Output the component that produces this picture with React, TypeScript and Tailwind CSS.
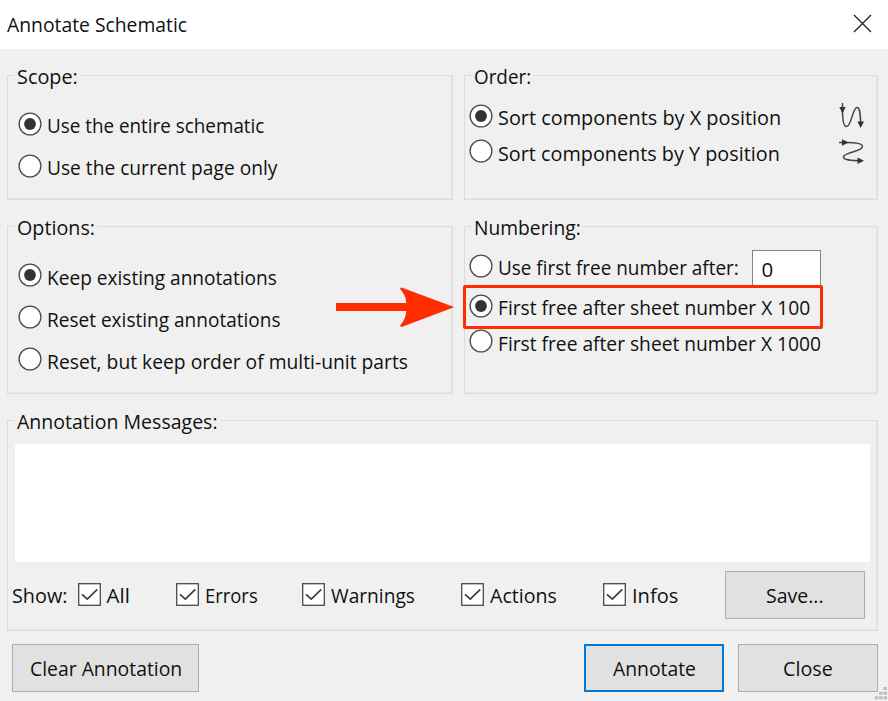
import { useLayoutEffect, useRef, useState } from "react";
import type { ReactNode } from "react";

/** A single line of text, condensed to fill the width of its box. */
function Text({ children, className }: { children: string; className: string }) {
  const box = useRef<HTMLSpanElement>(null);
  const inner = useRef<HTMLSpanElement>(null);
  const [scale, setScale] = useState(1);
  useLayoutEffect(() => {
    if (box.current && inner.current) {
      setScale(box.current.clientWidth / inner.current.offsetWidth);
    }
  }, [children]);
  return (
    <span ref={box} className={`block h-7 shrink-0 ${className}`}>
      <span
        ref={inner}
        className="inline-block origin-left whitespace-nowrap"
        style={{ transform: `scaleX(${scale})` }}
      >
        {children}
      </span>
    </span>
  );
}

function Group({ title, titleWidth, className, children }: { title: string; titleWidth: string; className: string; children: ReactNode }) {
  return (
    <section className={`flex flex-col border border-[#dcdcdc] shadow-[inset_-1px_-1px_0_#e7e7e7] ${className}`}>
      <div className="-mt-3.5 ml-1.5 self-start bg-[#f0f0f0] pr-0.5 pl-[3px]">
        <Text className={titleWidth}>{title}</Text>
      </div>
      {children}
    </section>
  );
}

function Radio({ label, width, checked = false }: { label: string; width: string; checked?: boolean }) {
  return (
    <label className="flex h-7 items-center">
      <svg className="-mt-[3px] mr-[5px] size-6 shrink-0" viewBox="0 0 24 24">
        <circle cx="12" cy="12" r="10.9" fill="#fff" stroke="#4a4a4a" strokeWidth="1.3" />
        {checked && <circle cx="12" cy="12" r="5.9" fill="#333" />}
      </svg>
      <Text className={width}>{label}</Text>
    </label>
  );
}

function Check({ label, width, className }: { label: string; width: string; className: string }) {
  return (
    <label className={`flex h-7 shrink-0 items-center ${className}`}>
      <svg className="-mt-[2px] mr-[5.5px] size-[23px] shrink-0" viewBox="0 0 23 23">
        <rect x=".7" y=".7" width="21.6" height="21.6" fill="#fff" stroke="#4a4a4a" strokeWidth="1.3" />
        <path d="M4 11.400 9.300 16.200 19.300 6.300" fill="none" stroke="#3c3c3c" strokeWidth="1.7" />
      </svg>
      <Text className={width}>{label}</Text>
    </label>
  );
}

function Button({ label, width, className }: { label: string; width: string; className: string }) {
  return (
    <button className={`flex h-12 shrink-0 items-center justify-center bg-[#e1e1e1] ${className}`}>
      <Text className={`${width} text-left`}>{label}</Text>
    </button>
  );
}

function SortXIcon() {
  return (
    <svg className="h-8 w-7" viewBox="0 0 28 32">
      <path d="M4.5 1V8C4.5 18 5.5 24.5 8.5 24.5C13.5 24.5 14.5 5.5 19 5.5C22 5.5 22.5 12 22.7 24" fill="none" stroke="#444" strokeWidth="1.5" />
      <path d="M1.300 5h6.400l-3.200 6.500zM19.400 19.500h6.600l-3.300 6.500z" fill="#333" />
    </svg>
  );
}

function SortYIcon() {
  return (
    <svg className="h-8 w-7" viewBox="0 0 28 32">
      <path d="M1 4.5H8C18 4.5 24.5 5.5 24.5 8.5C24.5 13.5 5.5 14.5 5.5 19C5.5 22 12 22.5 24 22.7" fill="none" stroke="#444" strokeWidth="1.5" />
      <path d="M4 1.300v6.400l6.500-3.200zM19.500 19.400v6.600l6.500-3.300z" fill="#333" />
    </svg>
  );
}

export default function App() {
  return (
    <div className="relative flex h-[701px] w-[888px] flex-col overflow-hidden bg-[#f0f0f0] font-['Open_Sans','Noto_Sans',sans-serif] text-[20.5px] leading-7 text-[#111]">
      <header className="flex h-[49px] shrink-0 justify-between bg-white pt-[10px] pr-[16px] pl-[7px]">
        <Text className="w-[180px]">Annotate Schematic</Text>
        <svg className="mt-[4px] size-[19px]" viewBox="0 0 19 19">
          <path d="M1 1 18 18M18 1 1 18" stroke="#222" strokeWidth="1.3" />
        </svg>
      </header>

      <main className="flex flex-col pr-[10px] pl-[7px] pt-[26px]">
        <div className="flex gap-[11px]">
          <Group title="Scope:" titleWidth="w-[60.500px]" className="h-[125px] w-[446px]">
            <div className="mt-[21px] flex flex-col gap-3.5 pl-[9.5px]">
              <Radio label="Use the entire schematic" width="w-[217px]" checked />
              <Radio label="Use the current page only" width="w-[230px]" />
            </div>
          </Group>
          <Group title="Order:" titleWidth="w-[57px]" className="h-[125px] w-[414px]">
            <div className="mt-[13px] flex justify-between pr-[11px] pl-1">
              <div className="flex flex-col gap-[7.500px]">
                <Radio label="Sort components by X position" width="w-[283px]" checked />
                <Radio label="Sort components by Y position" width="w-[282px]" />
              </div>
              <div className="-mt-px flex flex-col gap-1">
                <SortXIcon />
                <SortYIcon />
              </div>
            </div>
          </Group>
        </div>

        <div className="mt-[26px] flex gap-[11px]">
          <Group title="Options:" titleWidth="w-[77.500px]" className="h-[168px] w-[446px]">
            <div className="mt-[21.500px] flex flex-col gap-3.5 pl-[9.5px]">
              <Radio label="Keep existing annotations" width="w-[230px]" checked />
              <Radio label="Reset existing annotations" width="w-[234px]" />
              <Radio label="Reset, but keep order of multi-unit parts" width="w-[361px]" />
            </div>
          </Group>
          <Group title="Numbering:" titleWidth="w-[107px]" className="h-[168px] w-[414px]">
            <div className="relative mt-3 flex flex-col pl-1">
              <div className="flex h-[40px] items-start">
                <Radio label="Use first free number after:" width="w-[241px]" />
                <div className="-mt-[3px] ml-[13px] flex h-9 w-[69px] border border-b-0 border-[#858585] bg-white pt-[4px] pl-[8.500px]">
                  <Text className="w-[12px]">0</Text>
                </div>
              </div>
              <div className="flex flex-col gap-[7.500px]">
                <Radio label="First free after sheet number X 100" width="w-[312px]" checked />
                <Radio label="First free after sheet number X 1000" width="w-[323px]" />
              </div>
              <div className="absolute top-[32px] -left-[2px] h-[44px] w-[360px] rounded-[2px] border-[3.5px] border-[#ff2d00]" />
              <svg className="absolute top-[33px] -left-[130px] h-[42px] w-[120px]" viewBox="0 0 120 42">
                <path d="M1 17.1H71.2Q71.2 9.5 65.3 3.3Q64.7 1.2 67.2 1.7L118.3 20.7Q118.8 21.1 118.3 21.5L67.2 40.8Q64.700 41.100 65.300 39.200Q71.200 32.500 71.200 25H1Z" fill="#ff2d00" />
              </svg>
            </div>
          </Group>
        </div>

        <Group title="Annotation Messages:" titleWidth="w-[201px]" className="mt-[26px] h-[211px] w-[871px]">
          <div className="mt-[9px] ml-[7px] h-[118px] w-[855px] bg-white" />
          <div className="mt-[9px] flex h-12 items-center pl-1">
            <Text className="w-[55px]">Show:</Text>
            <Check label="All" width="w-[23px]" className="ml-[11px] w-[98px]" />
            <Check label="Errors" width="w-[52.500px]" className="w-[126px]" />
            <Check label="Warnings" width="w-[84px]" className="w-[159px]" />
            <Check label="Actions" width="w-[67px]" className="w-[142px]" />
            <Check label="Infos" width="w-[46px]" className="w-[122px]" />
            <Button label="Save..." width="w-[58px]" className="w-[140px] border border-[#adadad]" />
          </div>
        </Group>

        <footer className="mt-[13px] flex pl-[5px]">
          <Button label="Clear Annotation" width="w-[152px]" className="w-[187px] border border-[#adadad]" />
          <Button label="Annotate" width="w-[83px]" className="ml-[385px] w-[140px] border-2 border-[#0078d7]" />
          <Button label="Close" width="w-[50px]" className="ml-[14px] w-[140px] border border-[#adadad]" />
        </footer>
      </main>

      <svg className="absolute right-0 bottom-0 size-[14px]" viewBox="0 0 14 14">
        <path d="M9.500 0h3.500v3H9.500zM9.500 4.700h3.500v3H9.500zM5.100 4.700h3.500v3H5.100zM9.500 9.300h3.500v3H9.500zM5.100 9.300h3.500v3H5.100zM.7 9.300h3.500v3H.7z" fill="#bcbcbc" />
      </svg>
    </div>
  );
}
